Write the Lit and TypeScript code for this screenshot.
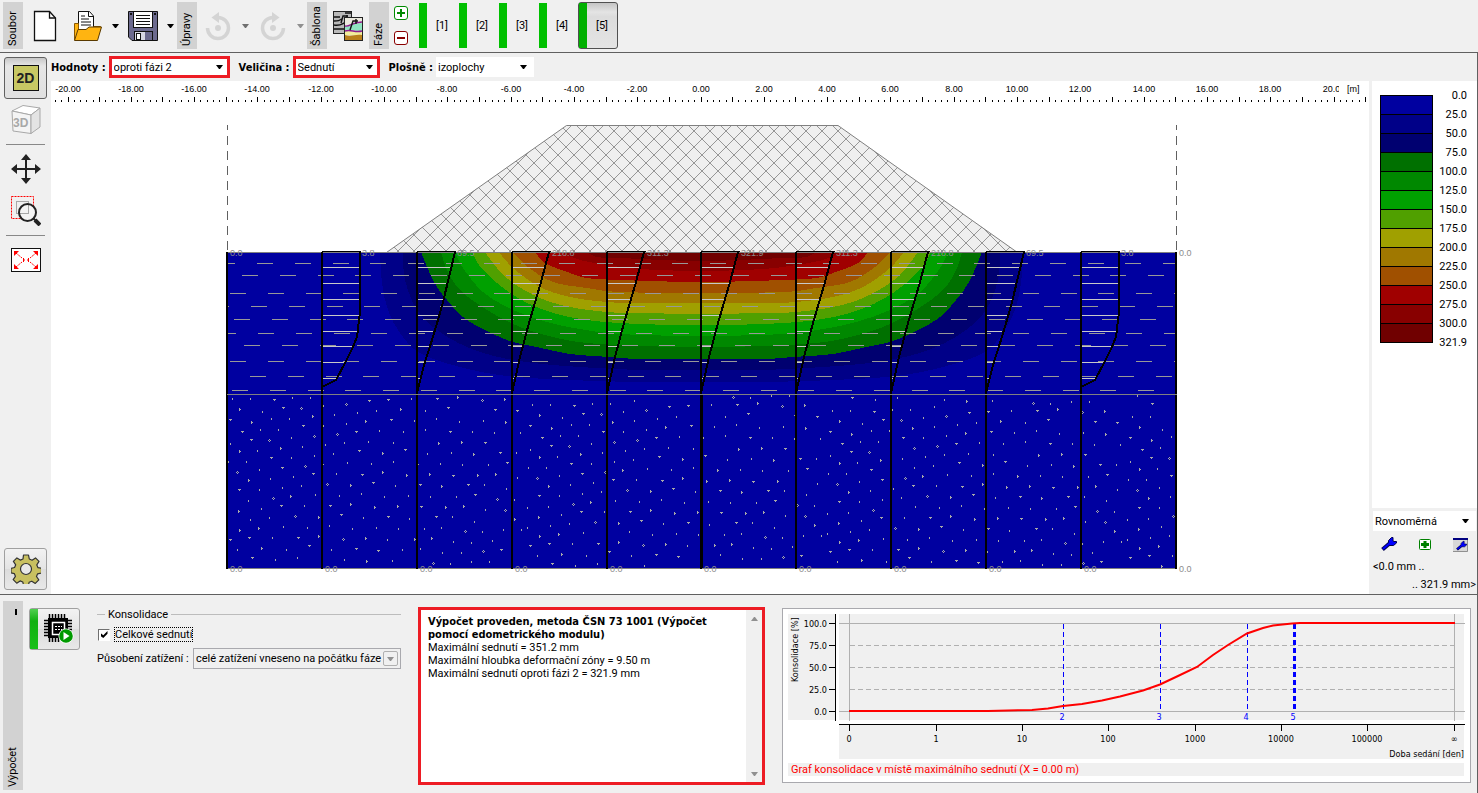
import { LitElement, html, svg, css } from "lit";
import { customElement, state } from "lit/decorators.js";
import { classMap } from "lit/directives/class-map.js";

type Point = [number, number];

const BANDS = [
  { from: "0.0", color: "#0000a0" },
  { from: "25.0", color: "#000088" },
  { from: "50.0", color: "#000070" },
  { from: "75.0", color: "#007000" },
  { from: "100.0", color: "#008800" },
  { from: "125.0", color: "#00a000" },
  { from: "150.0", color: "#50a000" },
  { from: "175.0", color: "#a0a000" },
  { from: "200.0", color: "#a07800" },
  { from: "225.0", color: "#a05000" },
  { from: "250.0", color: "#a00000" },
  { from: "275.0", color: "#880000" },
  { from: "300.0", color: "#700000" },
];
const MAXIMUM = "321.9";

const AXIS_X = 701;
const SURFACE_Y = 252;
const LAYER_Y = 394;
const BOTTOM_Y = 568;

// Left half of each isoline, from the surface down to the axis of symmetry.
const ISOLINES: Point[][] = [
  [[380, 252], [382, 283], [388, 310], [400, 333], [420, 353], [460, 367], [507, 376], [570, 380], [640, 382], [701, 382]],
  [[403, 252], [405, 280], [417, 310], [437, 330], [467, 347], [503, 358], [553, 365], [640, 370], [701, 370]],
  [[421, 252], [433, 280], [447, 300], [467, 320], [507, 340], [537, 347], [570, 354], [610, 357], [640, 359], [701, 359]],
  [[441, 252], [447, 270], [460, 290], [487, 310], [520, 327], [553, 337], [587, 343], [640, 346], [701, 347]],
  [[455, 252], [463, 268], [483, 292], [513, 310], [547, 322], [580, 329], [620, 334], [701, 336]],
  [[472, 252], [483, 270], [513, 295], [547, 311], [587, 320], [640, 324], [701, 325]],
  [[485, 252], [497, 268], [513, 283], [540, 298], [570, 307], [607, 312], [640, 313], [701, 314]],
  [[499, 252], [513, 268], [540, 287], [570, 297], [607, 302], [640, 303], [701, 303]],
  [[513, 252], [528, 267], [553, 282], [587, 288], [620, 292], [701, 293]],
  [[535, 252], [545, 263], [570, 273], [587, 278], [620, 280], [701, 282]],
  [[560, 252], [580, 260], [607, 265], [640, 269], [701, 271]],
  [[587, 252], [597, 257], [620, 258], [701, 261]],
];

const EDGE_CURVE: Point[] = [[39, 252], [39, 312], [36, 337], [31, 349], [24, 363], [15, 380], [1, 387]];
const SLOPE_CURVE: Point[] = [[39, 252], [34, 273], [27, 302], [22, 320], [16, 340], [8, 365], [1, 393]];
const INNER_CURVE: Point[] = [[38, 252], [30, 282], [18, 323], [9, 357], [1, 393]];

const COLUMNS: { x: number; value: string; curve?: Point[] }[] = [
  { x: 227, value: "0.0" },
  { x: 322, value: "3.8", curve: EDGE_CURVE },
  { x: 417, value: "69.5", curve: SLOPE_CURVE },
  { x: 512, value: "218.8", curve: INNER_CURVE },
  { x: 607, value: "311.3", curve: INNER_CURVE },
  { x: 701, value: "321.9", curve: INNER_CURVE },
  { x: 796, value: "311.3", curve: INNER_CURVE },
  { x: 891, value: "218.8", curve: INNER_CURVE },
  { x: 986, value: "69.5", curve: SLOPE_CURVE },
  { x: 1081, value: "3.8", curve: EDGE_CURVE },
  { x: 1176, value: "0.0" },
];

const COLUMN_HATCH = [267, 283, 299, 315, 331, 346, 362, 378];

// Clay hatch: [row, x of the first dash].
const CLAY_ROWS: Point[] = [
  [263, 257], [275, 242], [293, 230], [306, 251], [319, 234],
  [333, 258], [345, 244], [361, 230], [376, 250], [390, 232],
];
const CLAY_STEP = 37.75;

// Gravel marks in one 300 px tile, in thirds of a pixel.
const GRAVEL: Record<string, string> = {
  tick:
    "40,57 94,57 220,54 274,54 130,96 157,117 211,117 124,150 178,150 217,174 34,192 115,213 250,201 286,228 217,234 28,246 82,246 121,270 154,297 223,291 247,318 190,324 121,330 289,345 88,363 25,366 256,378 127,387 151,414 94,420 25,426 193,441 265,444 160,474 55,510 202,510 169,540 235,534 " +
    "346,45 577,57 313,78 472,93 415,99 346,105 382,132 586,123 313,138 481,153 553,156 376,189 448,186 523,189 319,195 343,222 385,249 457,252 523,246 352,282 427,342 361,348 496,351 568,348 529,318 331,438 433,414 400,447 571,417 472,444 538,447 505,480 337,510 550,510 376,540 520,543 " +
    "619,93 652,117 619,150 721,126 793,123 760,156 826,159 697,219 625,222 664,252 730,255 808,255 796,315 862,327 634,351 712,351 799,390 700,411 616,447 667,444 766,426 853,450 790,456 703,486 757,489 820,483 604,507 670,519 727,519 694,552 757,546 811,546 904,159 892,219 895,294 886,360 907,450",
  down:
    "163,62 190,86 31,120 67,158 94,182 250,140 154,236 187,266 280,284 58,332 184,380 88,476 31,482 235,476 268,500 97,536 448,65 505,60 514,120 409,156 418,215 556,212 427,285 460,309 331,380 364,405 505,411 409,507 475,513 652,59 685,84 826,90 691,158 796,191 841,221 862,251 700,288 745,317 601,315 766,347 604,383 649,413 844,512 892,95",
  right:
    "62,88 98,127 281,109 185,205 62,214 89,301 215,349 59,394 119,445 62,451 299,412 299,469 128,505 545,88 440,124 491,220 311,253 491,277 563,286 395,316 395,373 467,382 536,379 440,475 585,478 443,544 716,52 857,58 860,127 659,190 728,187 764,223 596,254 632,283 776,286 830,283 668,319 680,382 734,379 638,475 887,418",
  ring:
    "244,85 148,181 52,277 283,169 256,259 160,355 226,409 379,73 352,163 322,313 370,478 787,61 832,358 856,391 736,454 790,514 640,550",
};

const parsePoints = (text: string): Point[] =>
  text.trim().split(/\s+/).map((pair) => pair.split(",").map((n) => Math.floor(Number(n) / 3)) as Point);

const gravelPath = (): string => {
  const shapes: Record<string, string> = {
    tick: "h1v2h-1z",
    down: "h3v1h-1v1h-1v-1h-1z",
    right: "h1v1h1v1h-1v1h-1z",
    ring: "m1 0h1v1h-1zm1 1h1v1h-1zm-1 1h1v1h-1zm-1 -1h1v1h-1z",
  };
  let d = "";
  for (const [kind, text] of Object.entries(GRAVEL)) {
    for (const [px, py] of parsePoints(text)) {
      for (let tile = 0; tile < 4; tile++) {
        const x = 219 + px + tile * 300;
        let y = 379 + py + tile * 6;
        if (y > BOTTOM_Y - 3) y -= 172;
        if (x < 1173 && y > LAYER_Y) d += `M${x} ${y}${shapes[kind]}`;
      }
    }
  }
  return d;
};

// Smooth curve through the points (Catmull-Rom turned into cubic segments).
const isolinePath = (half: Point[]): string => {
  const mirrored = half.slice(0, -1).map(([x, y]) => [2 * AXIS_X - x + 1, y] as Point).reverse();
  const pts = [...half, ...mirrored];
  let d = `M${pts[0].join(" ")}`;
  for (let i = 0; i < pts.length - 1; i++) {
    const a = pts[Math.max(i - 1, 0)];
    const b = pts[i];
    const c = pts[i + 1];
    const e = pts[Math.min(i + 2, pts.length - 1)];
    const c1 = [b[0] + (c[0] - a[0]) / 6, b[1] + (c[1] - a[1]) / 6].map((n) => n.toFixed(1));
    const c2 = [c[0] - (e[0] - b[0]) / 6, c[1] - (e[1] - b[1]) / 6].map((n) => n.toFixed(1));
    d += `C${c1.join(" ")} ${c2.join(" ")} ${c.join(" ")}`;
  }
  return d + "Z";
};

const widthAt = (curve: Point[], y: number): number => {
  for (let i = 1; i < curve.length; i++) {
    const [x0, y0] = curve[i - 1];
    const [x1, y1] = curve[i];
    if (y <= y1) return Math.round(x0 + ((x1 - x0) * (y - y0)) / (y1 - y0));
  }
  return 0;
};

const range = (from: number, to: number): number[] =>
  Array.from({ length: to - from + 1 }, (_, i) => from + i);

const base = css`
  :host {
    font-family: Roboto, "Liberation Sans", sans-serif;
    font-size: 11px;
    line-height: 13px;
    color: #000;
  }
  * {
    box-sizing: border-box;
  }
  button {
    font: inherit;
    color: inherit;
    margin: 0;
    padding: 0;
    border: 0;
    background: none;
  }
  svg {
    display: block;
  }
  .strong {
    font-family: "DejaVu Sans Condensed", "DejaVu Sans", sans-serif;
    font-weight: bold;
  }
`;

const caret = (color = "#000") =>
  svg`<svg class="caret" width="7" height="4" viewBox="0 0 7 4" aria-hidden="true"><path d="M0 0h7L4 4H3z" fill=${color} /></svg>`;

@customElement("drop-down")
export class DropDown extends LitElement {
  static properties = {
    options: { type: Array },
    label: { type: String },
    variant: { type: String, reflect: true },
  };
  declare options: string[];
  declare label: string;
  declare variant: string;

  constructor() {
    super();
    this.options = [];
    this.label = "";
    this.variant = "plain";
  }

  static styles = [
    base,
    css`
      :host {
        display: inline-grid;
        align-items: center;
        height: 20px;
        background: #fff;
      }
      :host([variant="marked"]) {
        height: 22px;
        border: 3px solid #ed1c24;
      }
      :host([variant="disabled"]) {
        height: 21px;
        background: #f0f0f0;
        border: 1px solid #a9a9ae;
      }
      select,
      .arrow {
        grid-area: 1 / 1;
      }
      select {
        appearance: none;
        width: 100%;
        border: 0;
        margin: 0;
        padding: 0 2px;
        background: transparent;
        font: inherit;
        color: #000;
        opacity: 1;
      }
      .arrow {
        justify-self: end;
        padding-right: 7px;
        pointer-events: none;
      }
      :host([variant="marked"]) .arrow {
        padding-right: 4px;
      }
      :host([variant="disabled"]) .arrow {
        display: grid;
        place-items: center;
        width: 15px;
        height: 15px;
        margin-right: 2px;
        padding: 0;
        border: 1px solid #b0b0b0;
        border-radius: 2px;
      }
    `,
  ];

  render() {
    const off = this.variant === "disabled";
    return html`
      <select aria-label=${this.label} ?disabled=${off}>
        ${this.options.map((o) => html`<option>${o}</option>`)}
      </select>
      <span class="arrow">${caret(off ? "#909090" : "#000")}</span>
    `;
  }
}

@customElement("main-toolbar")
export class MainToolbar extends LitElement {
  @state() private phase = 5;

  static styles = [
    base,
    css`
      :host {
        display: flex;
        align-items: center;
        height: 53px;
        padding: 0 3px 1px;
        border-bottom: 1px solid #606060;
        background: #f0f0f0;
      }
      .tab {
        width: 20px;
        height: 47px;
        padding: 3px 0;
        background: #d2d2d2;
        writing-mode: vertical-rl;
        transform: rotate(180deg);
        line-height: 20px;
      }
      .tool {
        display: grid;
        place-items: center;
        width: 42px;
        height: 40px;
      }
      .tool.new {
        margin: 0 1px;
      }
      .drop {
        display: grid;
        place-items: center;
        width: 13px;
        height: 40px;
      }
      .stack {
        display: grid;
        gap: 11px;
        margin: 0 10px 0 5px;
      }
      .phase {
        display: flex;
        align-items: center;
        width: 40px;
        height: 47px;
        padding: 1px;
        border-radius: 3px;
      }
      .phase .bar {
        width: 8px;
        height: 45px;
        background: #00c000;
      }
      .phase .name {
        flex: 1;
        text-align: center;
      }
      .phase.active {
        border: 1px solid #505050;
        padding: 0;
        background: linear-gradient(#c4c4c4, #e4e4e4 20%, #dcdcdc 30%, #e4e4e4);
      }
      .phase.active .bar {
        background: #00b000;
      }
    `,
  ];

  render() {
    const undo = svg`
      <path d="M2.500 17a10.500 10.500 0 1 0 10.500-10.500" fill="none" stroke="#d4d4d4" stroke-width="3.500" />
      <path d="M6.500 6.500L14 1v11z" fill="#d4d4d4" /><circle cx="13" cy="17" r="3" fill="#d4d4d4" />`;
    return html`
      <span class="tab">Soubor</span>
      <button class="tool new" aria-label="Nový">
        <svg width="24" height="32" viewBox="0 0 24 32">
          <path d="M1.500 1.500h15l6 6.500v22.500h-21z" fill="#fff" stroke="#111" stroke-width="1.300" />
          <path d="M16.500 1.500v6.500h6" fill="none" stroke="#111" stroke-width="1.300" />
        </svg>
      </button>
      <button class="tool" aria-label="Otevřít">
        <svg width="30" height="32" viewBox="0 0 30 32">
          <path d="M5.500 20V1.500h11l4 4.500V20" fill="#fff" stroke="#111" />
          <path d="M15.500 1.500v5h5M8 6h4M8 9h8M8 12h10M8 15h10" fill="none" stroke="#111" />
          <path d="M1.500 30V13.500h4V19M20.500 16.500h7V20" fill="#ffb411" stroke="#8a5800" />
          <path d="M1.500 30.500L5 19.500h8l3-2.500h12.500l-4 13.500z" fill="#ffb411" stroke="#5a3a00" />
        </svg>
      </button>
      <button class="drop" aria-label="Další soubory">${caret()}</button>
      <button class="tool" aria-label="Uložit">
        <svg width="30" height="30" viewBox="0 0 30 30">
          <path d="M.5.500h29v29H4l-3.500-3.500z" fill="#6c6a8e" stroke="#111" />
          <rect x="5.500" y=".5" width="19" height="16" fill="#fff" stroke="#111" />
          <path d="M8 4.500h14M8 7.500h14M8 10.500h14M8 13.500h14" stroke="#111" />
          <rect x="2" y="2" width="2" height="2" fill="#111" /><rect x="26" y="2" width="2" height="2" fill="#111" />
          <rect x="6.500" y="20.500" width="18" height="9" fill="#d8d8e4" stroke="#111" />
          <rect x="8.500" y="22.500" width="4" height="6" fill="#fff" stroke="#111" />
          <rect x="17" y="21" width="7" height="8" fill="#6c6a8e" />
        </svg>
      </button>
      <button class="drop" aria-label="Další uložení">${caret()}</button>
      <span class="tab">Úpravy</span>
      <button class="tool" aria-label="Zpět" disabled>
        <svg width="26" height="30" viewBox="0 0 26 30">${undo}</svg>
      </button>
      <button class="drop" aria-label="Historie zpět" disabled>${caret("#707070")}</button>
      <button class="tool" aria-label="Znovu" disabled>
        <svg width="26" height="30" viewBox="0 0 26 30"><g transform="matrix(-1 0 0 1 26 0)">${undo}</g></svg>
      </button>
      <button class="drop" aria-label="Historie znovu" disabled>${caret("#909090")}</button>
      <span class="tab">Šablona</span>
      <button class="tool" aria-label="Šablona">
        <svg width="30" height="30" viewBox="0 0 30 30">
          <rect x=".5" y=".5" width="18" height="22" fill="#b9b9b9" stroke="#222" />
          <path d="M1 6h6M1 10c4 0 5 0 9-3M1 14c6 1 8-1 10-2M1 18h10M8 12l2-7h5M12 2h6M14 4v4" fill="none" stroke="#111" stroke-width="1.400" />
          <rect x="11.500" y="6.500" width="18" height="23" fill="#eceadf" stroke="#222" />
          <path d="M12 15c4 1 8-3 17-3v8c-6 1-10-2-17-1z" fill="#8fe3c0" />
          <path d="M12 20c7-1 11 2 17 1v3H12z" fill="#f1ee9b" />
          <path d="M12 24c6 2 10-1 17 0v5H12z" fill="#b8801c" />
          <path d="M12 15c5 1 7-4 17-4M12 20c6-2 10 2 17 0" fill="none" stroke="#8d1b8d" stroke-width="1.400" />
          <path d="M17 19l3-9h5M23 8v5" fill="none" stroke="#111" stroke-width="1.400" />
        </svg>
      </button>
      <span class="tab">Fáze</span>
      <span class="stack">
        <button aria-label="Přidat fázi">
          <svg width="14" height="14" viewBox="0 0 14 14">
            <rect x=".5" y=".5" width="13" height="13" rx="2.500" fill="#fff" stroke="#008a00" />
            <path d="M3 7h8M7 3v8" stroke="#008a00" stroke-width="2" />
          </svg>
        </button>
        <button aria-label="Odebrat fázi">
          <svg width="14" height="14" viewBox="0 0 14 14">
            <rect x=".5" y=".5" width="13" height="13" rx="2.500" fill="#fff" stroke="#8a0000" />
            <path d="M3 7h8" stroke="#8a0000" stroke-width="2" />
          </svg>
        </button>
      </span>
      ${range(1, 5).map(
        (n) => html`
          <button class=${classMap({ phase: true, active: n === this.phase })} @click=${() => (this.phase = n)}>
            <span class="bar"></span><span class="name">[${n}]</span>
          </button>
        `,
      )}
    `;
  }
}

@customElement("view-tools")
export class ViewTools extends LitElement {
  static styles = [
    base,
    css`
      :host {
        display: flex;
        flex-direction: column;
        align-items: center;
        width: 51px;
        padding: 4px 0 4px;
        background: #f0f0f0;
      }
      button {
        display: grid;
        place-items: center;
        width: 43px;
        height: 42px;
        border: 1px solid transparent;
        border-radius: 3px;
      }
      button.pressed {
        border-color: #606060;
        background: linear-gradient(#c8c8c8, #e6e6e6 20%, #e0e0e0);
      }
      button.raised {
        margin-top: auto;
        border-color: #a0a0a0;
        background: linear-gradient(#f2f2f2, #e4e4e4 50%, #dcdcdc 50%, #e8e8e8);
      }
      .rule {
        width: 39px;
        height: 1px;
        margin: 3px 0;
        background: #888;
      }
      .flat {
        display: grid;
        place-items: center;
        width: 26px;
        height: 26px;
        border: 1px solid #111;
        background: #c8c864;
        font-family: "Liberation Sans", Arial, sans-serif;
        font-size: 14px;
        font-weight: bold;
        color: #222;
      }
      .cube {
        font-family: "Liberation Sans", Arial, sans-serif;
        font-size: 12px;
        font-weight: bold;
        fill: #a8a8a8;
      }
    `,
  ];

  render() {
    return html`
      <button class="pressed"><span class="flat">2D</span></button>
      <button disabled>
        <svg width="30" height="30" viewBox="0 0 30 30">
          <path d="M1 6L12 .500 29 3 20 10z" fill="#fff" stroke="#a8a8a8" />
          <path d="M1 6l19 4v18.500L2 26z" fill="#f4f4f4" stroke="#a8a8a8" />
          <path d="M20 10l9-7v19l-9 6.500z" fill="#e4e4e4" stroke="#a8a8a8" />
          <text class="cube" x="2" y="22">3D</text>
        </svg>
      </button>
      <span class="rule"></span>
      <button aria-label="Posun">
        <svg width="30" height="30" viewBox="0 0 30 30">
          <path d="M15 4v22M4 15h22" stroke="#222" stroke-width="2" />
          <path d="M15 0l5 6H10zM15 30l5-6H10zM0 15l6-5v10zM30 15l-6-5v10z" fill="#222" />
        </svg>
      </button>
      <button aria-label="Zvětšit výřez">
        <svg width="30" height="30" viewBox="0 0 30 30">
          <rect x=".5" y=".5" width="22" height="22" fill="none" stroke="#f00" stroke-dasharray="2 1" />
          <circle cx="16.500" cy="16.500" r="8.500" fill="#f4f4f4" />
          <rect x="5.500" y="5.500" width="12" height="12" fill="none" stroke="#a8a8a8" />
          <circle cx="16.500" cy="16.500" r="8.500" fill="none" stroke="#222" stroke-width="2" />
          <path d="M22.500 22.500l2 2" stroke="#222" stroke-width="2" />
          <path d="M24 24l5 5" stroke="#222" stroke-width="4" />
        </svg>
      </button>
      <span class="rule"></span>
      <button aria-label="Zobrazit vše">
        <svg width="30" height="24" viewBox="0 0 30 24">
          <rect x=".5" y=".5" width="29" height="23" fill="#fff" stroke="#111" />
          <path d="M5 5l6 5M25 5l-6 5M5 19l6-5M25 19l-6-5" stroke="#f00" stroke-dasharray="2 1" />
          <path d="M3 3h5L3 8zM27 3h-5l5 5zM3 21h5l-5-5zM27 21h-5l5-5z" fill="#f00" />
          <path d="M12.500 10v4M17.500 10v4M13 12h1M16 12h1" stroke="#f00" />
        </svg>
      </button>
      <button class="raised" aria-label="Nastavení">
        <svg width="30" height="30" viewBox="0 0 30 30">
          <path
            d="M12.500 1h5l.8 4 2.800 1.200 3.400-2.300 3.500 3.500-2.200 3.500 1.100 2.700 3.600.700v4.600l-3.900.9-1.100 2.700 2.300 3.400-3.500 3.500-3.500-2.200-2.700 1.100-.7 3.200h-4.800l-.8-3.500-2.700-1.100-3.400 2.300-3.500-3.500 2.200-3.400-1.100-2.700-3.300-.7v-4.600l3.600-.8 1.100-2.700-2.300-3.400 3.500-3.500 3.400 2.200 2.700-1.100z"
            fill="#c8c060" stroke="#333" stroke-width="1.200" stroke-linejoin="round" />
          <circle cx="15" cy="15" r="5.500" fill="#e8e8e8" stroke="#333" stroke-width="1.200" />
        </svg>
      </button>
    `;
  }
}

@customElement("section-view")
export class SectionView extends LitElement {
  static styles = [
    base,
    css`
      :host {
        display: block;
        background: #fff;
      }
      svg {
        width: 100%;
        height: 100%;
        font-family: "Liberation Sans", Arial, sans-serif;
        font-size: 9px;
      }
      .crisp {
        shape-rendering: crispEdges;
      }
      .scale {
        text-anchor: middle;
      }
      .value {
        fill: #8c8c8c;
      }
      .side {
        stroke: #606060;
        stroke-dasharray: 9 6;
        stroke-dashoffset: 4;
      }
    `,
  ];

  private ruler() {
    const at = (m: number) => Math.floor(AXIS_X + m * 31.65);
    return svg`
      <g class="crisp">
        ${range(-102, 105).map((i) => {
          const tall = i % 5 === 0;
          return svg`<rect x=${at(i / 5)} y=${tall ? 97 : 100} width="1" height=${tall ? 5 : 2} />`;
        })}
      </g>
      <g clip-path="url(#scale-area)">
        ${range(-10, 10).map((i) => svg`<text class="scale" x=${at(i * 2)} y="92">${(i * 2).toFixed(2)}</text>`)}
      </g>
      <text x="1347" y="92">[m]</text>
    `;
  }

  private columns() {
    return COLUMNS.map(({ x, value, curve }) => svg`
      ${curve
        ? svg`
          <g class="crisp">
            ${COLUMN_HATCH.map((y) => {
              const w = widthAt(curve, y);
              return w > 2 ? svg`<rect x=${x} y=${y} width=${w - 1} height="1" fill="#c8c8c8" />` : null;
            })}
            <polyline points=${curve.map(([dx, y]) => `${x + dx - 1},${y}`).join(" ")} fill="none" stroke="#000" stroke-width="2" />
            <rect x=${x} y=${SURFACE_Y - 1} width="39" height="1" />
          </g>`
        : null}
      <rect class="crisp" x=${x - 1} y=${SURFACE_Y} width="2" height=${BOTTOM_Y - SURFACE_Y + 1} />
      <text class="value" x=${x + (curve ? 40 : 3)} y="256">${value}</text>
      <text class="value" x=${x + 3} y="572">0.0</text>
    `);
  }

  render() {
    return html`
      <svg viewBox="51 81 1318 513" role="img" aria-label="Sednutí">
        <defs>
          <pattern id="fill-hatch" x="558" y="139" width="16" height="16" patternUnits="userSpaceOnUse">
            <path class="crisp" d="M-1 -1L17 17M-1 17L17 -1" stroke="#969696" />
          </pattern>
          <clipPath id="scale-area"><rect x="51" y="81" width="1288" height="30" /></clipPath>
          <clipPath id="clay-area"><rect x="227" y="252" width="949" height="142" /></clipPath>
        </defs>
        ${this.ruler()}
        <path class="crisp side" d="M227.500 125V252M1176.500 125V252" />
        <path d="M386.500 252.500L566.500 125.500H838L1017.500 252.500z" fill="#efefef" />
        <path d="M386.500 252.500L566.500 125.500H838L1017.500 252.500z" fill="url(#fill-hatch)" stroke="#808080" />
        <rect x="227" y="252" width="949" height="316" fill=${BANDS[0].color} />
        <g class="crisp">
          ${ISOLINES.map((line, i) => svg`<path d=${isolinePath(line)} fill=${BANDS[i + 1].color} />`)}
        </g>
        <g class="crisp" clip-path="url(#clay-area)" fill="#989898">
          ${CLAY_ROWS.map(([y, x]) =>
            range(-1, 25).map((i) => svg`<rect x=${Math.round(x + i * CLAY_STEP)} y=${y} width="16" height="1" />`),
          )}
        </g>
        <path class="crisp" d=${gravelPath()} fill="#a8a8a8" />
        <g class="crisp" fill="#808080">
          <rect x="227" y=${SURFACE_Y} width="950" height="1" />
          <rect x="227" y=${BOTTOM_Y} width="950" height="1" />
        </g>
        ${this.columns()}
        <rect class="crisp" x="700" y=${LAYER_Y} width="3" height=${BOTTOM_Y - LAYER_Y} />
        <rect class="crisp" x="227" y=${LAYER_Y} width="950" height="1" fill="#808080" />
      </svg>
    `;
  }
}

@customElement("color-legend")
export class ColorLegend extends LitElement {
  static styles = [
    base,
    css`
      :host {
        display: flex;
        flex-direction: column;
        width: 106px;
        border-right: 1px solid #606060;
        background: #f0f0f0;
      }
      .scale {
        flex: 1;
        padding: 14px 10px 0 8px;
        background: #fff;
      }
      ul {
        margin: 0;
        padding: 0;
        list-style: none;
      }
      li {
        display: flex;
        justify-content: space-between;
        height: 19px;
      }
      .swatch {
        width: 53px;
        border: 1px solid #000;
        border-bottom: 0;
      }
      .last {
        height: 1px;
      }
      .last .swatch {
        border-width: 1px 0 0;
      }
      .number {
        margin-top: -6px;
      }
      .controls {
        display: grid;
        padding: 3px 1px 0;
      }
      .icons {
        display: flex;
        justify-content: space-between;
        align-items: center;
        height: 27px;
        padding: 0 8px;
      }
      .limit {
        line-height: 18px;
      }
      .limit.high {
        text-align: right;
      }
    `,
  ];

  render() {
    const wrench = svg`
      <path d="M1.500 12.500L8.500 6.500" stroke="#000050" stroke-width="4" />
      <path d="M7.500 8V3.500L10.500 .5h1.500V4l1 .500h2.500V6l-3 2.500H9z" fill="#0000ff" stroke="#000050" />
      <path d="M2 12L9 6" stroke="#0000ff" stroke-width="2" />`;
    return html`
      <div class="scale">
        <ul>
          ${BANDS.map(
            (band) => html`
              <li>
                <span class="swatch" style="background:${band.color}"></span>
                <span class="number">${band.from}</span>
              </li>
            `,
          )}
          <li class="last"><span class="swatch"></span><span class="number">${MAXIMUM}</span></li>
        </ul>
      </div>
      <div class="controls">
        <drop-down label="Stupnice" .options=${["Rovnoměrná"]}></drop-down>
        <div class="icons">
          <button aria-label="Nastavit stupnici">
            <svg width="16" height="15" viewBox="0 0 16 15">${wrench}</svg>
          </button>
          <button aria-label="Přidat rozsah">
            <svg width="12" height="11" viewBox="0 0 12 11">
              <rect x=".5" y=".5" width="11" height="10" rx="1" fill="#fff" stroke="#008000" />
              <path d="M2 5.500h8M6 2v7" stroke="#008000" stroke-width="3" />
            </svg>
          </button>
          <button aria-label="Správce stupnic">
            <svg width="15" height="14" viewBox="0 0 15 14">
              <rect width="15" height="14" fill="#d8d8d8" /><rect width="15" height="2" fill="#000080" />
              <path d="M14.500 2v11.500H0" fill="none" stroke="#909090" />
              <g transform="translate(3 3) scale(.68)">${wrench}</g>
            </svg>
          </button>
        </div>
        <div class="limit">&lt;0.0 mm ..</div>
        <div class="limit high">.. 321.9 mm&gt;</div>
      </div>
    `;
  }
}

@customElement("consolidation-chart")
export class ConsolidationChart extends LitElement {
  static styles = [
    base,
    css`
      :host {
        display: block;
        min-width: 0;
      }
      figure {
        margin: 0;
        border: 1px solid #a9a9ae;
        background: #fff;
      }
      svg {
        width: 100%;
        font-family: "DejaVu Sans Condensed", "DejaVu Sans", sans-serif;
        font-size: 9px;
      }
      .crisp {
        shape-rendering: crispEdges;
      }
      .mid {
        text-anchor: middle;
      }
      .end {
        text-anchor: end;
      }
      .blue {
        fill: #0000ff;
      }
      figcaption {
        margin: 2px 6px 6px 5px;
        padding-left: 3px;
        background: #f0f0f0;
        color: #f00;
      }
    `,
  ];

  render() {
    const ys = [623, 645, 667, 689, 711];
    const xs = [849, 936, 1022, 1108, 1195, 1281, 1367, 1454];
    const names = ["0", "1", "10", "100", "1000", "10000", "100000", "∞"];
    const phases: [number, string][] = [[1063, "2"], [1160, "3"], [1247, "4"]];
    return html`
      <figure>
        <svg viewBox="783 609 687 152" role="img" aria-label="Graf konsolidace">
          <g class="crisp">
            <rect x="788" y="614" width="47" height="106" fill="#f0f0f0" />
            <rect x="839" y="614" width="625" height="106" fill="#f0f0f0" />
            <rect x="839" y="725" width="625" height="34" fill="#f0f0f0" />
            <path d="M839 623.500h626M839 711.500h626M849.500 614v107M1454.500 614v107" stroke="#b0b0b0" />
            <path d="M850 645.500h604M850 667.500h604M850 689.500h604" stroke="#b0b0b0" stroke-dasharray="5 3" />
            <path d="M835.500 614v107M839 724.500h626" stroke="#000" />
            ${ys.map((y) => svg`<rect x="829" y=${y} width="6" height="1" />`)}
            ${xs.map((x) => svg`<rect x=${x} y="725" width="1" height="6" />`)}
            ${phases.map(([x]) => svg`<path d="M${x + 0.5} 624V711" stroke="#00f" stroke-dasharray="5 3" />`)}
            <path d="M1294.500 624V711" stroke="#00f" stroke-width="3" stroke-dasharray="5 3" />
          </g>
          <path
            d="M849 711H988L1032 710 1048 708.500 1063 706 1082 704 1102 700.500 1120 696.500 1143 690.500 1160 684.500 1178 676 1197 667 1213 655 1228 645 1247 633.500 1263 628 1273 625.500 1292 623.500 1300 623H1455"
            fill="none" stroke="#f00" stroke-width="2" />
          ${ys.map((y, i) => svg`<text class="end" x="827" y=${y + 4}>${(100 - i * 25).toFixed(1)}</text>`)}
          ${xs.map((x, i) => svg`<text class="mid" x=${x} y="742">${names[i]}</text>`)}
          ${[...phases, [1294, "5"] as [number, string]].map(
            ([x, n]) => svg`<text class="mid blue" x=${x - 1} y="720">${n}</text>`,
          )}
          <text class="end" x="1464" y="757">Doba sedání [den]</text>
          <text transform="translate(798 682) rotate(-90)">Konsolidace [%]</text>
        </svg>
        <figcaption>Graf konsolidace v místě maximálního sednutí (X = 0.00 m)</figcaption>
      </figure>
    `;
  }
}

@customElement("analysis-panel")
export class AnalysisPanel extends LitElement {
  static styles = [
    base,
    css`
      :host {
        display: flex;
        align-items: flex-start;
        gap: 17px;
        padding: 12px 6px 8px 3px;
        border-top: 1px solid #606060;
        border-right: 1px solid #606060;
        background: #f0f0f0;
      }
      .start {
        display: flex;
        align-items: flex-start;
        gap: 6px;
      }
      .tab {
        display: flex;
        justify-content: space-between;
        width: 20px;
        height: 189px;
        margin: -6px 0;
        padding: 3px 0;
        background: #d2d2d2;
        writing-mode: vertical-rl;
        transform: rotate(180deg);
        line-height: 20px;
      }
      .pin {
        align-self: flex-end;
        width: 2px;
        height: 6px;
        margin: 0 6px 5px;
        background: #000;
      }
      .run {
        display: flex;
        width: 51px;
        height: 42px;
        margin-top: 1px;
        border: 1px solid #a0a0a0;
        border-radius: 3px;
        background: linear-gradient(#f2f2f2, #e4e4e4 50%, #dcdcdc 50%, #e8e8e8);
      }
      .run .bar {
        width: 8px;
        height: 40px;
        background: linear-gradient(#50d050, #10b010 30%, #18c018);
      }
      .run svg {
        margin: 5px 0 0 6px;
      }
      fieldset {
        width: 304px;
        margin: 1px 0 0;
        padding: 7px 0 0;
        border: 0;
        border-top: 1px solid #bcbcbc;
      }
      legend {
        margin-left: 8px;
        padding: 0 3px;
      }
      .check {
        display: flex;
        align-items: center;
        gap: 5px;
        margin-bottom: 7px;
      }
      .check input {
        appearance: none;
        display: grid;
        place-items: center;
        width: 12px;
        height: 12px;
        margin: 0 0 0 1px;
        border: 1px solid;
        border-color: #707070 #fff #fff #707070;
        background: #fff;
      }
      .check input:checked::before {
        content: "";
        width: 7px;
        height: 7px;
        background: #000;
        clip-path: polygon(0 30%, 40% 60%, 100% 0, 100% 40%, 40% 100%, 0 70%);
      }
      .check span {
        outline: 1px dotted #000;
      }
      .row {
        display: flex;
        align-items: center;
        justify-content: space-between;
      }
      .row drop-down {
        width: 208px;
      }
      .result {
        display: flex;
        width: 347px;
        height: 178px;
        border: 3px solid #ed1c24;
        background: #fff;
      }
      .text {
        flex: 1;
        padding: 5px 7px;
      }
      .text p {
        margin: 0;
      }
      .scrollbar {
        display: flex;
        flex-direction: column;
        justify-content: space-between;
        align-items: center;
        width: 16px;
        padding: 7px 0 6px;
        background: #f0f0f0;
      }
      consolidation-chart {
        flex: 1;
        margin-top: 1px;
      }
    `,
  ];

  render() {
    return html`
      <div class="start">
        <div class="tab"><span>Výpočet</span><span class="pin"></span></div>
        <button class="run" aria-label="Výpočet">
          <span class="bar"></span>
          <svg width="30" height="30" viewBox="0 0 30 30">
            <path d="M5.500 0v4M8.500 0v4M11.500 0v4M14.500 0v4M17.500 0v4M20.500 0v4M5.500 24v4M8.500 24v4M11.500 24v4M14.500 24v4" stroke="#000" stroke-width="1.500" />
            <path d="M0 6.500h4M0 9.500h4M0 12.500h4M0 15.500h4M0 18.500h4M0 21.500h4M24 6.500h4M24 9.500h4M24 12.500h4M24 15.500h4" stroke="#000" stroke-width="1.500" />
            <path d="M4 4h20v20H4z" fill="#000" />
            <rect x="8.500" y="8.500" width="12" height="12" fill="none" stroke="#fff" stroke-width="1.500" />
            <path d="M11 12.500h7M11 15.500h7" stroke="#fff" stroke-dasharray="2 1" />
            <circle cx="22" cy="22" r="7.500" fill="#fff" />
            <circle cx="22" cy="22" r="6.800" fill="#009a00" />
            <path d="M19.500 18l6 4-6 4z" fill="#fff" />
          </svg>
        </button>
      </div>
      <fieldset>
        <legend>Konsolidace</legend>
        <label class="check"><input type="checkbox" checked /><span>Celkové sednutí</span></label>
        <div class="row">
          <span>Působení zatížení :</span>
          <drop-down variant="disabled" label="Působení zatížení" .options=${["celé zatížení vneseno na počátku fáze"]}></drop-down>
        </div>
      </fieldset>
      <div class="result">
        <div class="text">
          <p class="strong">Výpočet proveden, metoda ČSN 73 1001 (Výpočet pomocí edometrického modulu)</p>
          <p>Maximální sednutí = 351.2 mm</p>
          <p>Maximální hloubka deformační zóny = 9.50 m</p>
          <p>Maximální sednutí oproti fázi 2 = 321.9 mm</p>
        </div>
        <div class="scrollbar">
          <svg width="7" height="4" viewBox="0 0 7 4"><path d="M0 4h7L4 0H3z" fill="#909090" /></svg>
          ${caret("#909090")}
        </div>
      </div>
      <consolidation-chart></consolidation-chart>
    `;
  }
}

@customElement("app-root")
export class AppRoot extends LitElement {
  static styles = [
    base,
    css`
      :host {
        display: flex;
        flex-direction: column;
        min-height: 100vh;
        background: #f0f0f0;
      }
      .middle {
        display: flex;
        flex: 1;
      }
      .work {
        display: flex;
        flex-direction: column;
        flex: 1;
        min-width: 0;
      }
      .options {
        display: flex;
        align-items: center;
        height: 28px;
        border-right: 1px solid #606060;
      }
      .options .strong {
        margin-right: 3px;
      }
      .options drop-down {
        margin-right: 9px;
      }
      .values {
        width: 121px;
      }
      .quantity {
        width: 87px;
      }
      .surface {
        width: 98px;
      }
      .canvas {
        display: flex;
        flex: 1;
        gap: 3px;
      }
      section-view {
        flex: 1;
      }
    `,
  ];

  render() {
    return html`
      <main-toolbar></main-toolbar>
      <div class="middle">
        <view-tools></view-tools>
        <div class="work">
          <div class="options">
            <span class="strong">Hodnoty :</span>
            <drop-down class="values" variant="marked" label="Hodnoty" .options=${["oproti fázi 2"]}></drop-down>
            <span class="strong">Veličina :</span>
            <drop-down class="quantity" variant="marked" label="Veličina" .options=${["Sednutí"]}></drop-down>
            <span class="strong">Plošně :</span>
            <drop-down class="surface" label="Plošně" .options=${["izoplochy"]}></drop-down>
          </div>
          <div class="canvas">
            <section-view></section-view>
            <color-legend></color-legend>
          </div>
        </div>
      </div>
      <analysis-panel></analysis-panel>
    `;
  }
}
